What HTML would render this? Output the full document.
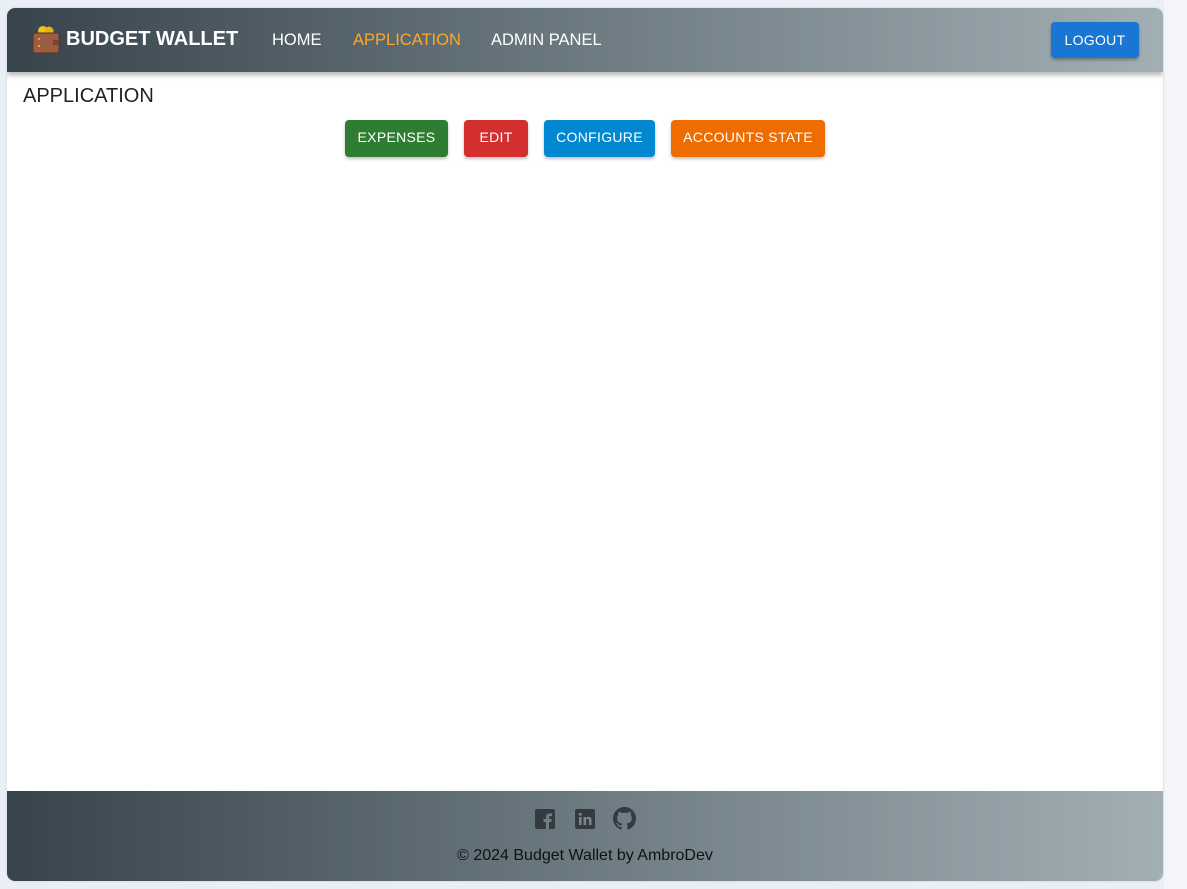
<!DOCTYPE html>
<html><head><meta charset="utf-8"><style>
body{margin:0;width:1187px;height:889px;background:#eaeef6;font-family:"Liberation Sans",sans-serif;position:relative;overflow:hidden}
.strip{position:absolute;left:1164px;top:0;width:23px;height:889px;background:#f3f5fa}
.card{position:absolute;left:7px;top:8px;width:1156px;height:873px;background:#fff;border-radius:8px;overflow:hidden;box-shadow:0 0 2px rgba(0,0,0,.15)}
.hdr{position:absolute;left:0;top:0;width:1156px;height:64px;background:linear-gradient(90deg,#37444c,#a2b0b6);box-shadow:0 3px 5px rgba(0,0,0,.3);z-index:2}
.brand{position:absolute;left:59px;top:20px;color:#fff;font-weight:bold;font-size:20px}
.nav{position:absolute;top:23px;color:#fff;font-size:16.5px}
.logout{position:absolute;left:1044px;top:14px;width:88px;height:36px;background:#1976d2;border-radius:4px;color:#fff;font-size:14px;text-align:center;line-height:36px;box-shadow:0 2px 3px rgba(0,0,0,.3);letter-spacing:.3px}
h1{position:absolute;left:16px;top:77px;margin:0;font-weight:normal;font-size:20px;color:#222}
.b{position:absolute;top:112px;height:37px;line-height:35px;color:#fff;font-size:14px;text-align:center;border-radius:4px;box-shadow:0 2px 3px rgba(0,0,0,.25);letter-spacing:.3px}
.ftr{position:absolute;left:0;top:783px;width:1156px;height:90px;background:linear-gradient(90deg,#37444c,#a2b0b6)}
.copy{position:absolute;left:0;width:1156px;top:56px;text-align:center;font-size:16px;color:#111}
</style></head><body>
<div class="strip"></div>
<div class="card">
<div class="hdr">
<svg style="position:absolute;left:24px;top:16px" width="30" height="30" viewBox="0 0 30 30"><circle cx="12" cy="7" r="5" fill="#f2c318"/><circle cx="18" cy="7" r="4.5" fill="#e7b313"/><rect x="2" y="9" width="26" height="20" rx="2" fill="#9b5d44" stroke="#5a3326"/><rect x="22" y="16" width="6" height="5" fill="#7a4433"/><circle cx="8" cy="15" r="1" fill="#f2c318"/><circle cx="8" cy="22" r="1" fill="#f2c318"/></svg>
<div class="brand">BUDGET WALLET</div>
<div class="nav" style="left:265px">HOME</div>
<div class="nav" style="left:346px;color:#ffa726">APPLICATION</div>
<div class="nav" style="left:484px">ADMIN PANEL</div>
<div class="logout">LOGOUT</div>
</div>
<h1>APPLICATION</h1>
<div class="b" style="left:338px;width:103px;background:#2e7d32">EXPENSES</div>
<div class="b" style="left:457px;width:64px;background:#d32f2f">EDIT</div>
<div class="b" style="left:537px;width:111px;background:#0288d1">CONFIGURE</div>
<div class="b" style="left:664px;width:154px;background:#ef6c00">ACCOUNTS STATE</div>
<div class="ftr">
<svg style="position:absolute;left:528px;top:18px" width="20" height="20" viewBox="0 0 20 20"><rect width="20" height="20" rx="2" fill="#333a40"/><path d="M14 20v-7h2.3l.4-3H14V8.5c0-.8.3-1.4 1.4-1.4H17V4.5c-.3 0-1.2-.1-2.3-.1-2.3 0-3.8 1.4-3.8 3.9V10H8.5v3h2.4v7z" fill="#6f7c82"/></svg>
<svg style="position:absolute;left:568px;top:18px" width="20" height="20" viewBox="0 0 20 20"><rect width="20" height="20" rx="2" fill="#333a40"/><rect x="4" y="8" width="2.6" height="8" fill="#78868c"/><circle cx="5.3" cy="5.2" r="1.5" fill="#78868c"/><path d="M8.5 8h2.5v1.2c.5-.8 1.4-1.4 2.7-1.4 2.2 0 2.8 1.4 2.8 3.4V16h-2.6v-4.3c0-1-.2-1.8-1.3-1.8s-1.5.8-1.5 1.8V16H8.5z" fill="#78868c"/></svg>
<svg style="position:absolute;left:606px;top:16px" width="23" height="23" viewBox="0 0 16 16"><path fill="#333a40" d="M8 0C3.58 0 0 3.58 0 8c0 3.54 2.29 6.53 5.47 7.59 .4 .07 .55-.17 .55-.38v-1.33c-2.23 .49-2.7-1.07-2.7-1.07-.36-.92-.89-1.17-.89-1.17-.73-.5 .06-.49 .06-.49 .8 .06 1.23 .83 1.23 .83 .72 1.23 1.87 .87 2.33 .67 .07-.52 .28-.87 .51-1.07-1.78-.2-3.64-.89-3.64-3.95 0-.87 .31-1.59 .82-2.15-.08-.2-.36-1.02 .08-2.12 0 0 .67-.21 2.2 .82A7.6 7.6 0 0 1 8 3.87c.68 0 1.36 .09 2 .27 1.53-1.04 2.2-.82 2.2-.82 .44 1.1 .16 1.92 .08 2.12 .51 .56 .82 1.27 .82 2.15 0 3.07-1.87 3.75-3.65 3.95 .29 .25 .54 .73 .54 1.48v2.2c0 .21 .15 .46 .55 .38A8.01 8.01 0 0 0 16 8c0-4.42-3.58-8-8-8z"/></svg>
<div class="copy">© 2024 Budget Wallet by AmbroDev</div>
</div>
</div>
</body></html>
